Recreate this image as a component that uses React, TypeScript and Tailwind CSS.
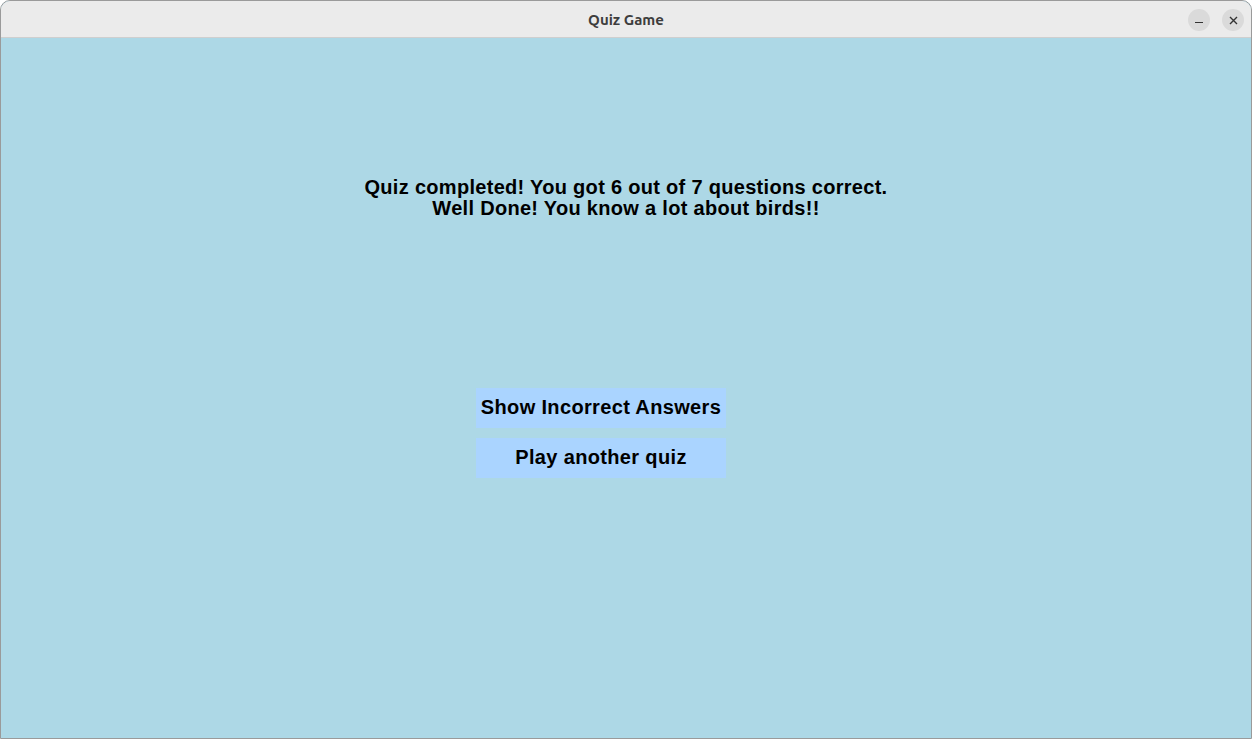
export default function App() {
  return (
    <div className="flex h-[739px] w-[1252px] flex-col overflow-hidden rounded-t-[10px] border border-[#9a9a9a] bg-[#add8e6]">
      {/* title bar */}
      <div className="relative flex h-[37px] shrink-0 items-center justify-center border-b border-[#cfcfcf] bg-[#ebebeb] pt-[2px]">
        <span className="font-['Ubuntu','DejaVu_Sans',sans-serif] text-[15px] font-bold text-[#3d3d3d]">
          Quiz Game
        </span>
        <div className="absolute right-[7px] top-[8px] flex gap-[12px]">
          <button className="flex h-[22px] w-[22px] items-center justify-center rounded-full bg-[#dadada]">
            <span className="mt-[5px] block h-[1px] w-[8px] bg-[#333]" />
          </button>
          <button className="flex h-[22px] w-[22px] items-center justify-center rounded-full bg-[#dadada]">
            <svg width="9" height="9" viewBox="0 0 9 9">
              <path d="M1 1L8 8M8 1L1 8" stroke="#333" strokeWidth="1.4" />
            </svg>
          </button>
        </div>
      </div>

      {/* content */}
      <main className="flex flex-1 flex-col items-center pt-[139px] font-['Liberation_Sans',Arial,sans-serif] text-black">
        <p className="text-center text-[20px] font-bold leading-[21px] tracking-[0.3px]">
          Quiz completed! You got 6 out of 7 questions correct.
          <br />
          Well Done! You know a lot about birds!!
        </p>
        <div className="mr-[50px] mt-[169px] flex flex-col gap-[10px]">
          <button className="h-[40px] w-[250px] bg-[#aad4ff] pb-[2px] text-[20px] font-bold tracking-[0.35px]">
            Show Incorrect Answers
          </button>
          <button className="h-[40px] w-[250px] bg-[#aad4ff] pb-[2px] text-[20px] font-bold tracking-[0.35px]">
            Play another quiz
          </button>
        </div>
      </main>
    </div>
  );
}
